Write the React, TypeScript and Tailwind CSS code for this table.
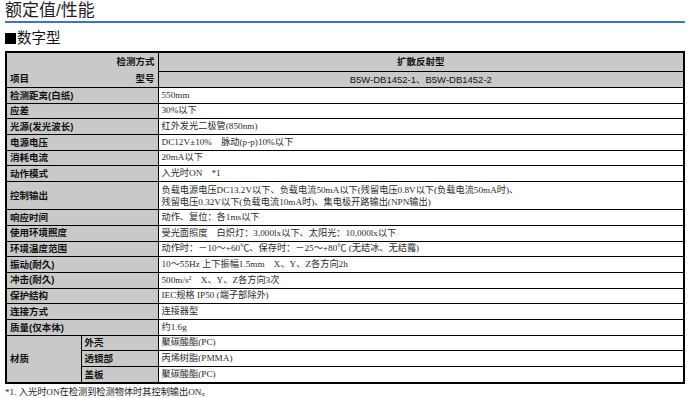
import React from "react";

const sans = "font-['Liberation_Sans','Noto_Sans_CJK_SC',sans-serif]";
const serif = "font-['Liberation_Serif','Noto_Sans_CJK_SC',serif]";

const rows: { label: string; value: React.ReactNode; tall?: boolean }[] = [
  { label: "检测距离(白纸)", value: "550mm" },
  { label: "应差", value: "30%以下" },
  { label: "光源(发光波长)", value: "红外发光二极管(850nm)" },
  { label: "电源电压", value: "DC12V±10%　脉动(p-p)10%以下" },
  { label: "消耗电流", value: "20mA以下" },
  { label: "动作模式", value: "入光时ON　*1" },
  {
    label: "控制输出",
    tall: true,
    value: (
      <>
        负载电源电压DC13.2V以下、负载电流50mA以下(残留电压0.8V以下(负载电流50mA时)、
        <br />
        残留电压0.32V以下(负载电流10mA时)、集电极开路输出(NPN输出)
      </>
    ),
  },
  { label: "响应时间", value: "动作、复位：各1ms以下" },
  { label: "使用环境照度", value: "受光面照度　白炽灯：3,000lx以下、太阳光：10,000lx以下" },
  { label: "环境温度范围", value: "动作时：－10～+60℃、保存时：－25～+80℃ (无结冰、无结露)" },
  { label: "振动(耐久)", value: "10～55Hz 上下振幅1.5mm　X、Y、Z各方向2h" },
  {
    label: "冲击(耐久)",
    value: (
      <>
        500m/s<sup className="text-[6px]">2</sup>　X、Y、Z各方向3次
      </>
    ),
  },
  { label: "保护结构", value: "IEC规格 IP50 (端子部除外)" },
  { label: "连接方式", value: "连接器型" },
  { label: "质量(仅本体)", value: "约1.6g" },
];

const materials = [
  { part: "外壳", value: "聚碳酸酯(PC)" },
  { part: "透镜部", value: "丙烯树脂(PMMA)" },
  { part: "盖板", value: "聚碳酸酯(PC)" },
];

const labelCell = `border border-black bg-[#c9c9c9] px-[3px] text-left align-middle text-[9.5px] font-semibold text-[#111] ${sans}`;
const valueCell = `border border-black bg-white px-[3px] text-left align-middle text-[9.2px] text-[#2a2a2a] ${serif}`;

function Box({ tall, children }: { tall?: boolean; children: React.ReactNode }) {
  return (
    <div className={`flex items-center ${tall ? "h-[27px] leading-[12px]" : "h-[14.7px] leading-none"}`}>
      <div>{children}</div>
    </div>
  );
}

export default function App() {
  return (
    <div className="w-[693px] h-[398px] bg-white px-[5px] overflow-hidden">
      {/* title */}
      <h1 className={`text-[17px] leading-[21px] text-[#1e1e1e] ${sans}`}>额定值/性能</h1>
      <div className="h-[2px] w-[680px] bg-[#3477c2]" />

      <div className={`mt-[7px] flex items-center gap-[1px] text-[14.5px] leading-[17px] text-[#111] ${sans}`}>
        <span className="inline-block w-[11px] h-[11px] bg-black" />
        数字型
      </div>

      <table className="mt-[4px] w-[680px] border-collapse border-2 border-black table-fixed leading-none">
        <colgroup>
          <col className="w-[75px]" />
          <col className="w-[77px]" />
          <col />
        </colgroup>
        <tbody>
          <tr>
            <td colSpan={2} rowSpan={2} className={`border border-black bg-[#c9c9c9] px-[3px] text-[9.5px] font-semibold text-[#111] ${sans}`}>
              <div className="flex flex-col h-[34px]">
                <div className="h-[18px] flex items-center justify-end">检测方式</div>
                <div className="flex-1 flex items-center justify-between">
                  <span>项目</span>
                  <span>型号</span>
                </div>
              </div>
            </td>
            <td className={`border border-black bg-[#c9c9c9] text-[9.5px] font-semibold text-[#111] ${sans}`}>
              <div className="h-[18px] flex items-center justify-center">扩散反射型</div>
            </td>
          </tr>
          <tr>
            <td className={`border border-black bg-[#c9c9c9] text-[9.5px] text-[#111] ${sans}`}>
              <div className="h-[15px] flex items-center justify-center">B5W-DB1452-1、B5W-DB1452-2</div>
            </td>
          </tr>
          {rows.map((r) => (
            <tr key={r.label}>
              <td colSpan={2} className={labelCell}>
                <Box tall={r.tall}>{r.label}</Box>
              </td>
              <td className={valueCell}>
                <Box tall={r.tall}>{r.value}</Box>
              </td>
            </tr>
          ))}
          {materials.map((m, i) => (
            <tr key={m.part}>
              {i === 0 && (
                <td rowSpan={3} className={labelCell}>材质</td>
              )}
              <td className={labelCell}>
                <Box>{m.part}</Box>
              </td>
              <td className={valueCell}>
                <Box>{m.value}</Box>
              </td>
            </tr>
          ))}
        </tbody>
      </table>

      <p className={`mt-[2px] text-[9.2px] leading-[12px] text-[#222] ${serif}`}>
        *1. 入光时ON在检测到检测物体时其控制输出ON。
      </p>
    </div>
  );
}
